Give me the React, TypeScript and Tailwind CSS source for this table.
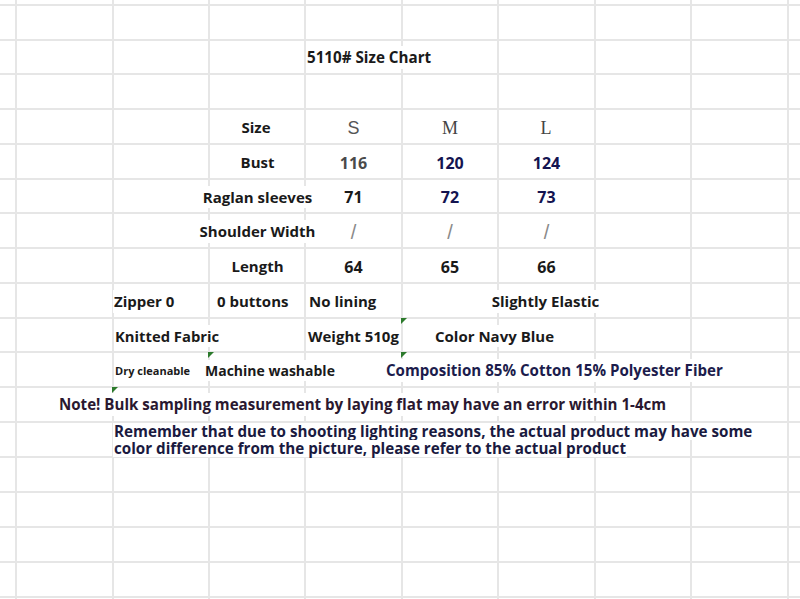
const vLines = [
  "col-start-2",
  "col-start-3",
  "col-start-4",
  "col-start-5",
  "col-start-6",
  "col-start-7",
  "col-start-8",
  "col-start-9",
  "col-start-10",
];

const hLines = [
  "row-start-2",
  "row-start-3",
  "row-start-4",
  "row-start-5",
  "row-start-6",
  "row-start-7",
  "row-start-8",
  "row-start-9",
  "row-start-10",
  "row-start-11",
  "row-start-12",
  "row-start-13",
  "row-start-14",
  "row-start-15",
  "row-start-16",
  "row-start-17",
  "row-start-18",
  "row-start-19",
];

const sizeRows = [
  {
    label: "Bust",
    row: "row-start-6",
    values: [
      { v: "116", c: "text-[#4a4a4a]" },
      { v: "120", c: "text-[#141450]" },
      { v: "124", c: "text-[#141450]" },
    ],
  },
  {
    label: "Raglan sleeves",
    row: "row-start-7",
    values: [
      { v: "71", c: "text-[#1a1a1a]" },
      { v: "72", c: "text-[#141450]" },
      { v: "73", c: "text-[#141450]" },
    ],
  },
  {
    label: "Shoulder Width",
    row: "row-start-8",
    values: [
      { v: "/", c: "slash" },
      { v: "/", c: "slash" },
      { v: "/", c: "slash" },
    ],
  },
  {
    label: "Length",
    row: "row-start-9",
    values: [
      { v: "64", c: "text-[#1a1a1a]" },
      { v: "65", c: "text-[#1a1a1a]" },
      { v: "66", c: "text-[#1a1a1a]" },
    ],
  },
];

const valueCols = ["col-start-5", "col-start-6", "col-start-7"];

function Flag({ className }: { className: string }) {
  // little green comment marker in a cell corner
  return (
    <div
      className={`${className} self-start justify-self-start w-0 h-0 border-t-[6px] border-t-[#2c7a2c] border-r-[6px] border-r-transparent`}
    />
  );
}

export default function App() {
  return (
    <div className="w-[800px] h-[599px] overflow-hidden bg-white text-[#1a1a1a] font-['Open_Sans','Noto_Sans',sans-serif] font-bold text-[15px]">
      <div className="grid w-full h-full grid-cols-[15px_97px_96px_96px_97px_96px_97px_96px_97px_13px] grid-rows-[4px_35px_34px_35px_35px_35px_34px_35px_35px_35px_34px_35px_35px_35px_35px_35px_35px_35px_3px]">
        {/* Sheet grid lines */}
        {vLines.map((c) => (
          <div key={c} className={`${c} row-span-full w-[2px] bg-[#e6e6e6]`} />
        ))}
        {hLines.map((r) => (
          <div key={r} className={`${r} col-span-full h-[2px] bg-[#e6e6e6]`} />
        ))}

        {/* Title */}
        <div className="row-start-3 col-start-5 col-span-3 flex items-center pl-[2px] pt-[3px]">
          <span className="bg-white px-[1px] whitespace-nowrap text-[15.2px]">5110# Size Chart</span>
        </div>

        {/* Size header */}
        <div className="row-start-5 col-start-4 flex items-center justify-center pt-[4px]">
          <span className="bg-white px-1">Size</span>
        </div>
        <div className="row-start-5 col-start-5 flex items-center justify-center pt-[6px] pl-[2px]">
          <span className="font-['Liberation_Sans',sans-serif] font-normal text-[18px] text-[#555]">S</span>
        </div>
        <div className="row-start-5 col-start-6 flex items-center justify-center pt-[6px] pl-[2px]">
          <span className="font-['Liberation_Serif',serif] font-normal text-[18px] text-[#444]">M</span>
        </div>
        <div className="row-start-5 col-start-7 flex items-center justify-center pt-[6px] pl-[1px]">
          <span className="font-['Liberation_Serif',serif] font-normal text-[18px] text-[#444]">L</span>
        </div>

        {/* Measurements */}
        {sizeRows.map((r) => (
          <>
            <div key={r.label} className={`${r.row} col-start-4 flex items-center justify-center pt-[4px] pl-[3px]`}>
              <span className="bg-white px-1 whitespace-nowrap">{r.label}</span>
            </div>
            {r.values.map((val, i) => (
              <div
                key={r.label + i}
                className={`${r.row} ${valueCols[i]} flex items-center justify-center pt-[4px] pl-[2px]`}
              >
                {val.c === "slash" ? (
                  <span className="font-['Liberation_Sans',sans-serif] font-normal text-[20px] text-[#8a8a8a]">/</span>
                ) : (
                  <span className={`bg-white px-1 text-[16px] ${val.c}`}>{val.v}</span>
                )}
              </div>
            ))}
          </>
        ))}

        {/* Details row 1 */}
        <div className="row-start-10 col-start-3 flex items-center pl-[1px] pt-[4px]">
          <span className="bg-white px-[1px] whitespace-nowrap">Zipper 0</span>
        </div>
        <div className="row-start-10 col-start-4 flex items-center pl-[8px] pt-[4px]">
          <span className="bg-white px-[1px] whitespace-nowrap">0 buttons</span>
        </div>
        <div className="row-start-10 col-start-5 flex items-center pl-[4px] pt-[4px]">
          <span className="bg-white px-[1px] whitespace-nowrap">No lining</span>
        </div>
        <div className="row-start-10 col-start-7 flex items-center justify-center pt-[4px]">
          <span className="bg-white px-[1px] whitespace-nowrap">Slightly Elastic</span>
        </div>

        {/* Details row 2 */}
        <div className="row-start-11 col-start-3 col-span-2 flex items-center pl-[2px] pt-[4px]">
          <span className="bg-white px-[1px] whitespace-nowrap text-[14.8px]">Knitted Fabric</span>
        </div>
        <div className="row-start-11 col-start-5 flex items-center pl-[3px] pt-[4px]">
          <span className="bg-white px-[1px] whitespace-nowrap">Weight 510g</span>
        </div>
        <div className="row-start-11 col-start-6 col-span-2 flex items-center pl-[33px] pt-[4px]">
          <span className="bg-white px-[1px] whitespace-nowrap">Color Navy Blue</span>
        </div>
        <Flag className="row-start-11 col-start-6 mt-[1px]" />

        {/* Details row 3 */}
        <div className="row-start-12 col-start-3 flex items-center pl-[2px] pt-[6px]">
          <span className="bg-white px-[1px] whitespace-nowrap text-[11px]">Dry cleanable</span>
        </div>
        <div className="row-start-12 col-start-3 col-span-3 flex items-center pl-[92px] pt-[4px]">
          <span className="bg-white px-[1px] whitespace-nowrap text-[14px]">Machine washable</span>
        </div>
        <div className="row-start-12 col-start-5 col-span-5 flex items-center pl-[81px] pt-[4px]">
          <span className="bg-white px-[1px] whitespace-nowrap text-[15.1px] text-[#1c1c4c]">
            Composition 85% Cotton 15% Polyester Fiber
          </span>
        </div>
        <Flag className="row-start-12 col-start-4 mt-[1px]" />
        <Flag className="row-start-12 col-start-6 mt-[1px]" />

        {/* Notes */}
        <div className="row-start-13 col-start-2 col-span-8 flex items-center pl-[43px] pt-[2px]">
          <span className="bg-white px-[1px] whitespace-nowrap text-[15.1px] text-[#2a1830]">
            Note! Bulk sampling measurement by laying flat may have an error within 1-4cm
          </span>
        </div>
        <Flag className="row-start-13 col-start-3 mt-[1px]" />
        <div className="row-start-14 col-start-3 col-span-7 flex flex-col items-start pl-[1px] pt-[2px] text-[15.2px] leading-[17px] text-[#1a1a40]">
          <span className="bg-white px-[1px] whitespace-nowrap">
            Remember that due to shooting lighting reasons, the actual product may have some
          </span>
          <span className="bg-white px-[1px] whitespace-nowrap">
            color difference from the picture, please refer to the actual product
          </span>
        </div>
      </div>
    </div>
  );
}
